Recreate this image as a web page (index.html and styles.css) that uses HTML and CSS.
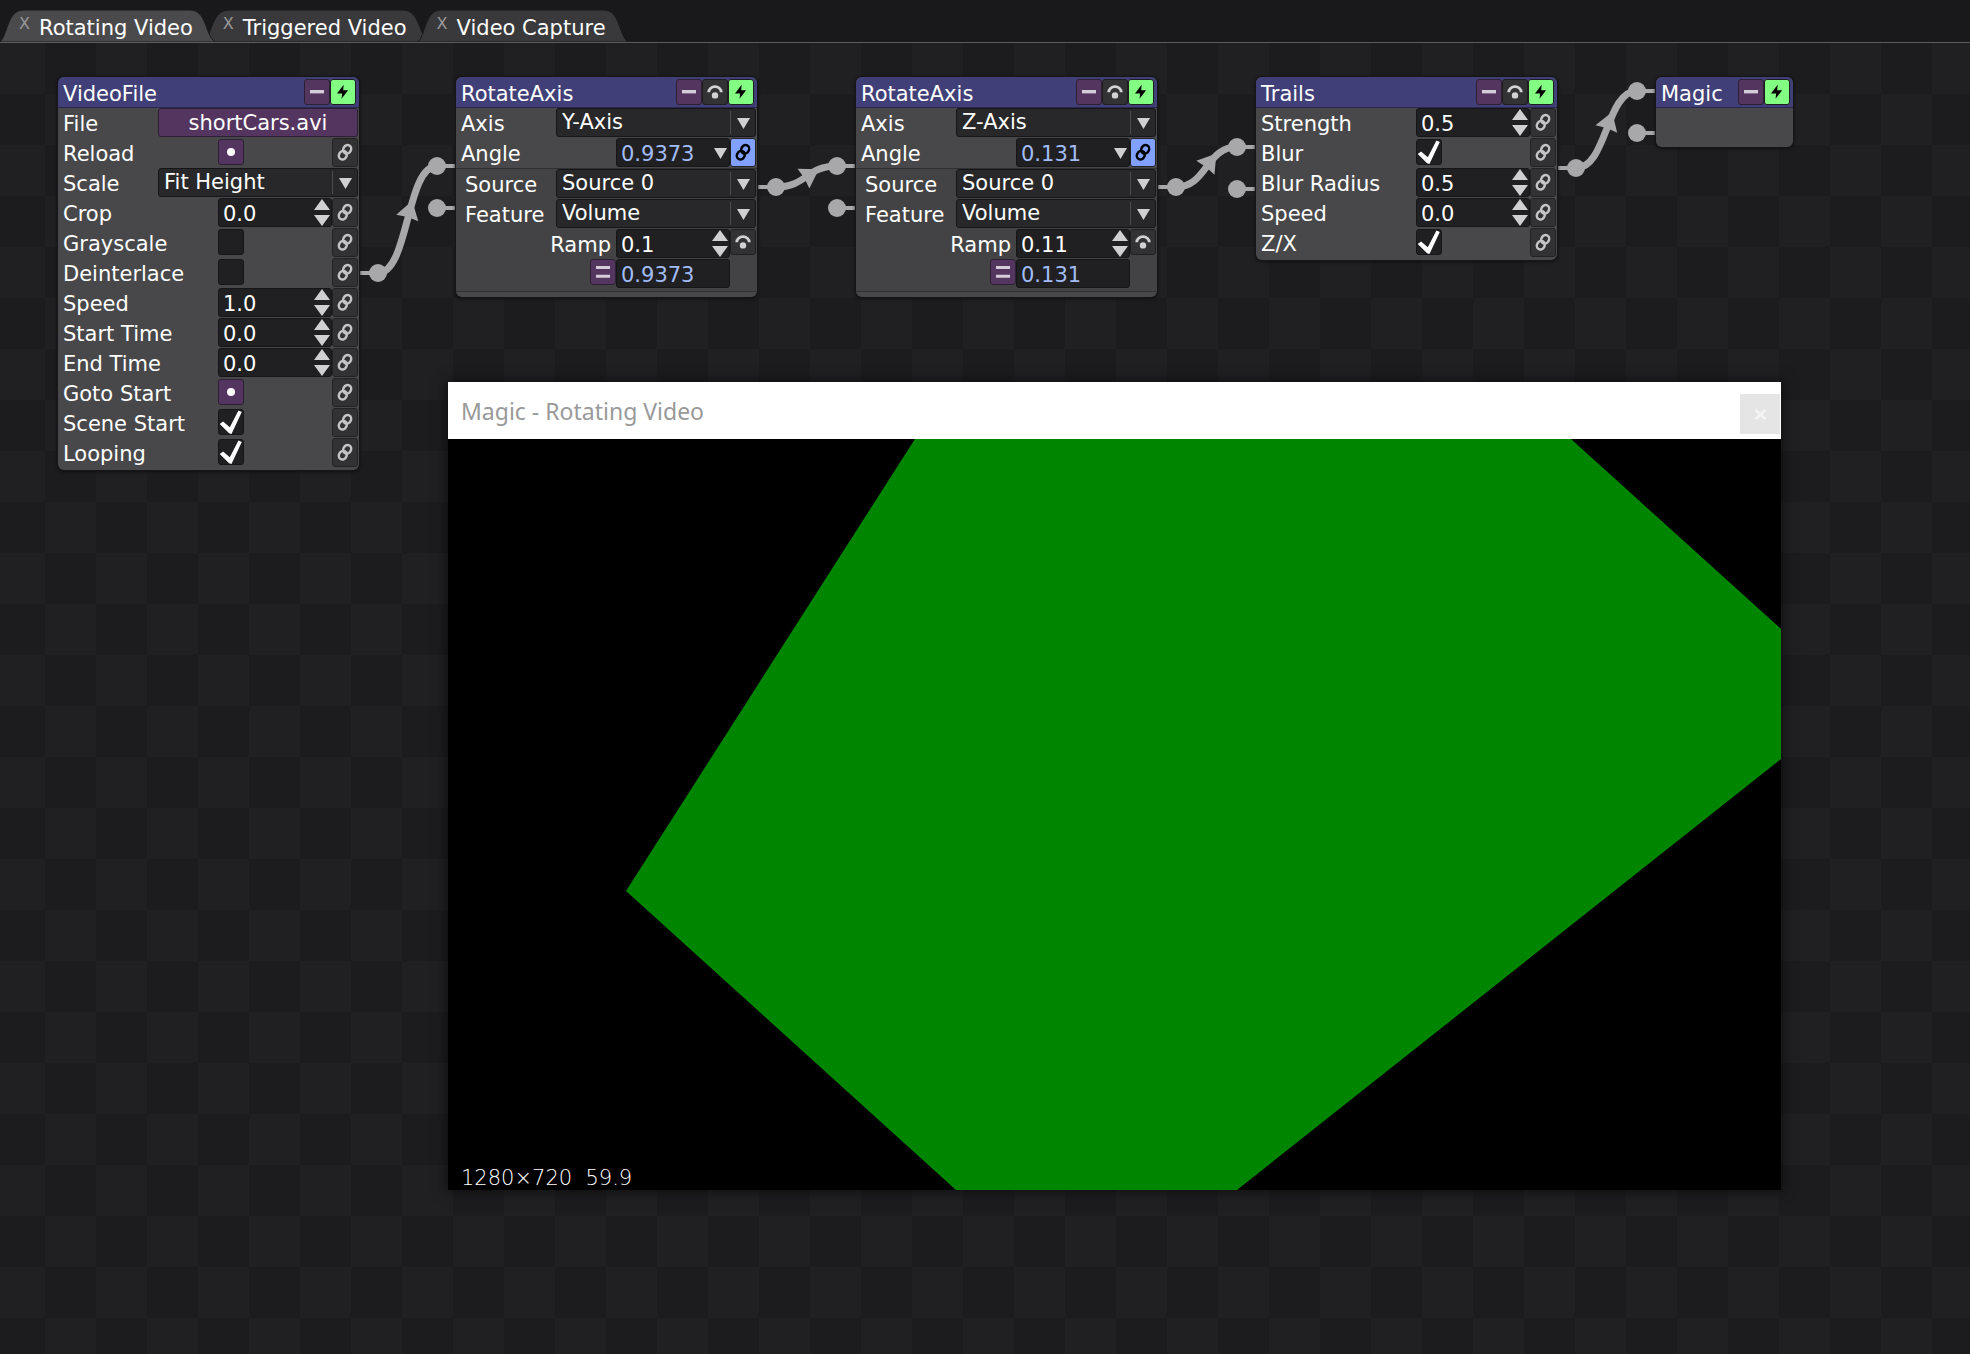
FILE: index.html
```html
<!DOCTYPE html>
<html lang="en">
<head>
<meta charset="utf-8">
<title>Magic</title>
<link rel="stylesheet" href="styles.css">
</head>
<body>
<svg class="defs" aria-hidden="true">
  <symbol id="minus" viewBox="0 0 26 26"><rect x="6" y="11" width="14" height="3.4" fill="#d4ccd6"/></symbol>
  <symbol id="equals" viewBox="0 0 26 26"><path d="M6 7h14v3H6zM6 15.7h14v3H6z" fill="#d4ccd6"/></symbol>
  <symbol id="bypass" viewBox="0 0 26 26"><path d="M6.8 13.2a6.2 5.6 0 0 1 12.4 0" fill="none" stroke="#d2d2d4" stroke-width="2.8"/><circle cx="13" cy="16.4" r="3.2" fill="#d2d2d4"/></symbol>
  <symbol id="bolt" viewBox="0 0 26 26"><path d="M13.6 5.8 13.2 11.3h4.9L11.6 19.8l.5-5.4H7z" fill="#000"/></symbol>
  <symbol id="link" viewBox="0 0 26 29"><g fill="none" stroke="currentColor" stroke-width="2.5"><ellipse cx="15.2" cy="11.3" rx="3.8" ry="4.4" transform="rotate(30 15.2 11.3)"/><ellipse cx="10.8" cy="17.2" rx="3.8" ry="4.4" transform="rotate(30 10.8 17.2)"/></g></symbol>
</svg>

<nav class="tabs">
  <div class="tab active">
    <svg class="shape" viewBox="0 0 215 33" preserveAspectRatio="none"><path d="M0 33C8 25 7 0 24 0H190C207 0 205 25 215 33z"/></svg>
    <button class="close" aria-label="Close Rotating Video">X</button><a href="#rotating">Rotating Video</a>
  </div>
  <div class="tab">
    <svg class="shape" viewBox="0 0 215 33" preserveAspectRatio="none"><path d="M0 33C8 25 7 0 24 0H190C207 0 205 25 215 33z"/></svg>
    <button class="close" aria-label="Close Triggered Video">X</button><a href="#triggered">Triggered Video</a>
  </div>
  <div class="tab">
    <svg class="shape" viewBox="0 0 215 33" preserveAspectRatio="none"><path d="M0 33C8 25 7 0 24 0H190C207 0 205 25 215 33z"/></svg>
    <button class="close" aria-label="Close Video Capture">X</button><a href="#capture">Video Capture</a>
  </div>
</nav>

<main class="stage">
  <svg class="wires" aria-hidden="true">
    <g class="wire">
      <path d="M378 230C409 230 406 123 437 123"/>
      <path d="M776 144C807 144 806 123 837 123"/>
      <path d="M1176 144C1207 144 1206 104 1237 104"/>
      <path d="M1576 125C1607 125 1606 48 1637 48"/>
    </g>
    <path class="stub" d="M360 230h18M437 123h18M437 165h18M758 144h18M837 123h18M837 165h18M1158 144h18M1237 104h18M1237 146h18M1558 125h18M1637 48h18M1637 90h18"/>
    <g class="port">
      <circle cx="378" cy="230" r="9"/><circle cx="437" cy="123" r="9"/><circle cx="437" cy="165" r="9"/>
      <circle cx="776" cy="144" r="9"/><circle cx="837" cy="123" r="9"/><circle cx="837" cy="165" r="9"/>
      <circle cx="1176" cy="144" r="9"/><circle cx="1237" cy="104" r="9"/><circle cx="1237" cy="146" r="9"/>
      <circle cx="1576" cy="125" r="9"/><circle cx="1637" cy="48" r="9"/><circle cx="1637" cy="90" r="9"/>
      <path d="M1-11.5 19 0 1 11.5 2 0z" transform="translate(407 176) rotate(-74)"/>
      <path d="M-3-11.5 15 0-3 11.5-2 0z" transform="translate(806 134) rotate(-31)"/>
      <path d="M-1-11.5 17 0-1 11.5 0 0z" transform="translate(1206 124) rotate(-52)"/>
      <path d="M1-11.5 19 0 1 11.5 2 0z" transform="translate(1606 87) rotate(-71)"/>
    </g>
  </svg>

  <section class="node n1">
    <header><h2>VideoFile</h2><button class="tool purple" aria-label="Collapse"><svg><use href="#minus"/></svg></button><button class="tool green" aria-label="Active"><svg><use href="#bolt"/></svg></button></header>
    <div class="row"><span class="name">File</span><button class="file">shortCars.avi</button></div>
    <div class="row"><label for="reload">Reload</label><span class="cell"><button class="tool purple dot" id="reload"></button></span><button class="link" aria-label="Link"><svg><use href="#link"/></svg></button></div>
    <div class="row"><label for="scale">Scale</label><span class="pick"><select id="scale"><option>Fit Height</option></select></span></div>
    <div class="row"><label for="crop">Crop</label><span class="cell spin"><input type="text" id="crop" value="0.0"></span><button class="link" aria-label="Link"><svg><use href="#link"/></svg></button></div>
    <div class="row"><label for="gray">Grayscale</label><span class="cell"><input type="checkbox" id="gray"></span><button class="link" aria-label="Link"><svg><use href="#link"/></svg></button></div>
    <div class="row"><label for="deint">Deinterlace</label><span class="cell"><input type="checkbox" id="deint"></span><button class="link" aria-label="Link"><svg><use href="#link"/></svg></button></div>
    <div class="row"><label for="speed">Speed</label><span class="cell spin"><input type="text" id="speed" value="1.0"></span><button class="link" aria-label="Link"><svg><use href="#link"/></svg></button></div>
    <div class="row"><label for="start">Start Time</label><span class="cell spin"><input type="text" id="start" value="0.0"></span><button class="link" aria-label="Link"><svg><use href="#link"/></svg></button></div>
    <div class="row"><label for="end">End Time</label><span class="cell spin"><input type="text" id="end" value="0.0"></span><button class="link" aria-label="Link"><svg><use href="#link"/></svg></button></div>
    <div class="row"><label for="goto">Goto Start</label><span class="cell"><button class="tool purple dot" id="goto"></button></span><button class="link" aria-label="Link"><svg><use href="#link"/></svg></button></div>
    <div class="row"><label for="scene">Scene Start</label><span class="cell"><input type="checkbox" id="scene" checked></span><button class="link" aria-label="Link"><svg><use href="#link"/></svg></button></div>
    <div class="row"><label for="loop">Looping</label><span class="cell"><input type="checkbox" id="loop" checked></span><button class="link" aria-label="Link"><svg><use href="#link"/></svg></button></div>
  </section>

  <section class="node rotate n2">
    <header><h2>RotateAxis</h2><button class="tool purple" aria-label="Collapse"><svg><use href="#minus"/></svg></button><button class="tool dark" aria-label="Bypass"><svg><use href="#bypass"/></svg></button><button class="tool green" aria-label="Active"><svg><use href="#bolt"/></svg></button></header>
    <div class="row"><label for="axis1">Axis</label><span class="pick"><select id="axis1"><option>Y-Axis</option></select></span></div>
    <div class="row"><label for="angle1">Angle</label><span class="cell drop"><input type="text" class="blue" id="angle1" value="0.9373"></span><button class="link on" aria-label="Link"><svg><use href="#link"/></svg></button></div>
    <div class="sub">
      <div class="row"><label for="source1">Source</label><span class="pick"><select id="source1"><option>Source 0</option></select></span></div>
      <div class="row"><label for="feature1">Feature</label><span class="pick"><select id="feature1"><option>Volume</option></select></span></div>
      <div class="row"><label class="right" for="ramp1">Ramp</label><span class="cell spin"><input type="text" id="ramp1" value="0.1"></span><button class="tool dark" aria-label="Bypass ramp"><svg><use href="#bypass"/></svg></button></div>
      <div class="row out"><button class="tool purple" aria-label="Add modifier"><svg><use href="#equals"/></svg></button><span class="cell"><input type="text" class="blue" aria-label="Result" value="0.9373"></span></div>
    </div>
  </section>

  <section class="node rotate n3">
    <header><h2>RotateAxis</h2><button class="tool purple" aria-label="Collapse"><svg><use href="#minus"/></svg></button><button class="tool dark" aria-label="Bypass"><svg><use href="#bypass"/></svg></button><button class="tool green" aria-label="Active"><svg><use href="#bolt"/></svg></button></header>
    <div class="row"><label for="axis2">Axis</label><span class="pick"><select id="axis2"><option>Z-Axis</option></select></span></div>
    <div class="row"><label for="angle2">Angle</label><span class="cell drop"><input type="text" class="blue" id="angle2" value="0.131"></span><button class="link on" aria-label="Link"><svg><use href="#link"/></svg></button></div>
    <div class="sub">
      <div class="row"><label for="source2">Source</label><span class="pick"><select id="source2"><option>Source 0</option></select></span></div>
      <div class="row"><label for="feature2">Feature</label><span class="pick"><select id="feature2"><option>Volume</option></select></span></div>
      <div class="row"><label class="right" for="ramp2">Ramp</label><span class="cell spin"><input type="text" id="ramp2" value="0.11"></span><button class="tool dark" aria-label="Bypass ramp"><svg><use href="#bypass"/></svg></button></div>
      <div class="row out"><button class="tool purple" aria-label="Add modifier"><svg><use href="#equals"/></svg></button><span class="cell"><input type="text" class="blue" aria-label="Result" value="0.131"></span></div>
    </div>
  </section>

  <section class="node n4">
    <header><h2>Trails</h2><button class="tool purple" aria-label="Collapse"><svg><use href="#minus"/></svg></button><button class="tool dark" aria-label="Bypass"><svg><use href="#bypass"/></svg></button><button class="tool green" aria-label="Active"><svg><use href="#bolt"/></svg></button></header>
    <div class="row"><label for="strength">Strength</label><span class="cell spin"><input type="text" id="strength" value="0.5"></span><button class="link" aria-label="Link"><svg><use href="#link"/></svg></button></div>
    <div class="row"><label for="blur">Blur</label><span class="cell"><input type="checkbox" id="blur" checked></span><button class="link" aria-label="Link"><svg><use href="#link"/></svg></button></div>
    <div class="row"><label for="radius">Blur Radius</label><span class="cell spin"><input type="text" id="radius" value="0.5"></span><button class="link" aria-label="Link"><svg><use href="#link"/></svg></button></div>
    <div class="row"><label for="tspeed">Speed</label><span class="cell spin"><input type="text" id="tspeed" value="0.0"></span><button class="link" aria-label="Link"><svg><use href="#link"/></svg></button></div>
    <div class="row"><label for="zx">Z/X</label><span class="cell"><input type="checkbox" id="zx" checked></span><button class="link" aria-label="Link"><svg><use href="#link"/></svg></button></div>
  </section>

  <section class="node n5">
    <header><h2>Magic</h2><button class="tool purple" aria-label="Collapse"><svg><use href="#minus"/></svg></button><button class="tool green" aria-label="Active"><svg><use href="#bolt"/></svg></button></header>
    <div class="empty"></div>
  </section>

  <section class="window">
    <header class="titlebar"><h2>Magic - Rotating Video</h2><button aria-label="Close window"><svg viewBox="0 0 40 40"><path d="M15.5 16l10 9M25.5 16l-10 9" stroke="#f4f4f4" stroke-width="2.4"/></svg></button></header>
    <div class="video">
      <svg viewBox="0 0 1333 751" preserveAspectRatio="none"><path fill="#008500" d="M467 0H1123L1333 190V320L789 751H508L178 452z"/></svg>
      <p class="fps">1280×720  59.9</p>
    </div>
  </section>
</main>
</body>
</html>
```
FILE: styles.css
```css
* { box-sizing: border-box; }
body {
  margin: 0;
  min-height: 100vh;
  display: flex;
  flex-direction: column;
  background: #1c1c1e;
  color: #fff;
  font: 21px/32px "DejaVu Sans", Verdana, sans-serif;
}
button, input, select { font: inherit; color: inherit; margin: 0; padding: 0; border: 0; border-radius: 3px; }
h2, p { margin: 0; font-size: inherit; font-weight: normal; }
svg { display: block; }
.defs { position: absolute; width: 0; height: 0; }

/* tab strip */
.tabs {
  display: flex;
  height: 43px;
  padding-top: 10px;
  background: #19191b;
  border-bottom: 1px solid #5c5c5e;
}
.tab {
  position: relative;
  display: flex;
  height: 32px;
  padding: 0 22px 0 19px;
  margin-right: -11px;
}
.tab a { position: relative; color: #fff; text-decoration: none; line-height: 36px; }
.tab .shape { position: absolute; inset: 0; width: 100%; height: 100%; fill: #39393b; stroke: #19191b; }
.tab.active { z-index: 1; }
.tab.active .shape { fill: #4a4a4c; }
.close {
  position: relative;
  width: 20px;
  height: 28px;
  background: none;
  color: #98989a;
  font: 16px/28px "DejaVu Sans", sans-serif;
  text-align: left;
}

/* canvas */
.stage {
  position: relative;
  flex: 1;
  min-height: 1200px;
  overflow: hidden;
  background: repeating-conic-gradient(#202022 0 25%, #1c1c1e 0 50%) -6px -51px / 102px 102px;
}
.wires { position: absolute; inset: 0; width: 100%; height: 100%; }
.wire { fill: none; stroke: #a8a8aa; stroke-width: 7; }
.stub { stroke: #a8a8aa; stroke-width: 4; }
.port { fill: #a8a8aa; }

/* nodes */
.node {
  position: absolute;
  top: 34px;
  width: 301px;
  padding-bottom: 2px;
  border-radius: 6px;
  background: #48484a;
  box-shadow: 0 0 0 1px #161618, 0 1px 3px 1px #101012;
}
.n1 { left: 58px; }
.n2 { left: 456px; }
.n3 { left: 856px; }
.n4 { left: 1256px; }
.n5 { left: 1656px; width: 137px; }
.rotate { padding-bottom: 5px; }
.node header {
  display: flex;
  height: 31px;
  padding: 2px 3px 0 5px;
  border-radius: 6px 6px 0 0;
  border-bottom: 1px solid #2a2850;
  background: #413f77;
}
.node h2 { flex: 1; line-height: 30px; }
.empty { height: 37px; }
.row { display: flex; height: 30px; padding: 0 1px 0 5px; }
.row label, .name { flex: 1; }
.row .right { padding-right: 5px; text-align: right; }
.sub {
  padding-bottom: 2px;
  border: 1px solid #303032;
  border-width: 1px 0;
  background: #434345;
}
.sub .row { padding-left: 9px; }
.sub .out { justify-content: flex-end; padding-right: 27px; }

/* controls */
.tool { width: 26px; height: 26px; border: 1px solid #1e1e20; }
.tool svg { width: 26px; height: 26px; margin: -1px; }
.row .tool { margin-top: 1px; }
.sub .row .tool { margin-top: 0; }
.purple { background: #54355f; border-color: #2c2034; }
.dark { background: #323234; }
.green { background: #82ff82; }
.dot { display: flex; align-items: center; justify-content: center; }
.dot::before { content: ""; width: 8px; height: 8px; border-radius: 50%; background: #fff; }
.file { width: 200px; height: 29px; padding-top: 2px; background: #54355f; border: 1px solid #2c2034; line-height: 25px; }
.link { width: 26px; height: 29px; background: #323234; border: 1px solid #222224; color: #c4c4c6; }
.link svg { width: 26px; height: 29px; margin: -1px; }
.link.on { background: #82a0ff; color: #000; }
.cell { position: relative; display: flex; align-items: flex-start; width: 114px; height: 29px; }
.cell input[type="text"] {
  width: 100%;
  height: 29px;
  padding: 2px 0 0 4px;
  background: #202022;
  border: 1px solid #161618;
}
.cell .blue { color: #a2bcf6; }
.spin::before, .spin::after, .drop::after, .pick::after {
  content: "";
  position: absolute;
  right: 2px;
  width: 16px;
  height: 11px;
  background: #d0d0d2;
}
.spin::before { top: 1px; clip-path: polygon(50% 0, 100% 100%, 0 100%); }
.spin::after { top: 17px; clip-path: polygon(0 0, 100% 0, 50% 100%); }
.drop::after, .pick::after { top: 10px; width: 13px; clip-path: polygon(0 0, 100% 0, 50% 100%); }
.drop::after { right: 3px; }
.pick { position: relative; width: 200px; height: 29px; }
.pick::after { right: 6px; }
.pick::before { content: ""; position: absolute; top: 3px; right: 25px; width: 1px; height: 23px; background: #4c4c4e; }
select {
  appearance: none;
  display: block;
  width: 100%;
  height: 29px;
  padding: 0 0 0 5px;
  line-height: 27px;
  background: #28282a;
  border: 1px solid #161618;
}
input[type="checkbox"] {
  appearance: none;
  width: 26px;
  height: 26px;
  margin-top: 1px;
  background: #202022;
  border: 1px solid #161618;
}
input[type="checkbox"]:checked::before {
  content: "";
  display: block;
  width: 24px;
  height: 24px;
  background: #fff;
  clip-path: polygon(3% 58%, 17% 48%, 45% 72%, 81% 2%, 95% 8%, 52% 100%, 42% 97%);
}

/* output window */
.window {
  position: absolute;
  left: 448px;
  top: 339px;
  width: 1333px;
  box-shadow: 0 0 12px 2px rgba(0, 0, 0, 0.5);
  background: #000;
}
.titlebar {
  display: flex;
  align-items: center;
  justify-content: space-between;
  height: 57px;
  padding: 0 1px 0 13px;
  background: #fff;
  color: #999;
  font: 23px/40px "Noto Sans", "Open Sans", sans-serif;
}
.titlebar button { width: 40px; height: 40px; margin-top: 6px; border-radius: 0; background: #e5e5e5; }
.video { position: relative; }
.video svg { width: 100%; height: 751px; }
.fps {
  position: absolute;
  left: 13px;
  bottom: 0;
  font: 21px/24px "DejaVu Sans Light", "DejaVu Sans", sans-serif;
  font-weight: 200;
  white-space: pre;
}
```
